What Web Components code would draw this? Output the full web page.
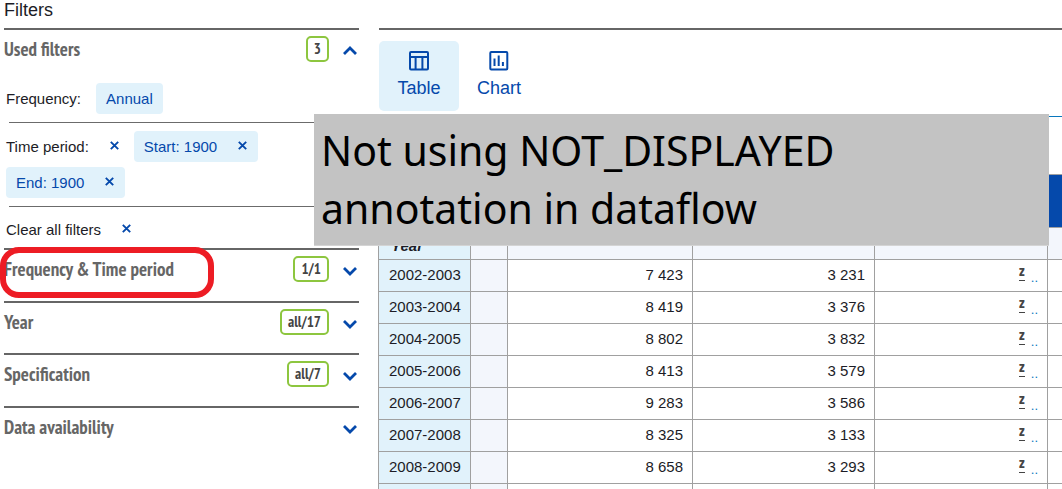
<!DOCTYPE html>
<html lang="en">
<head>
<meta charset="utf-8">
<title>Data explorer</title>
<style>
html, body { margin: 0; height: 100%; }
body { font: 15px/20px "Liberation Sans", Arial, sans-serif; color: #1c1c26; background: #fff; overflow: hidden; }
</style>
</head>
<body>
<data-explorer></data-explorer>

<script>
const NARROW = '"PT Sans Narrow", "Liberation Sans Narrow", "Open Sans Condensed", sans-serif';

function define(name, html, setup) {
  const template = document.createElement('template');
  template.innerHTML = html;
  customElements.define(name, class extends HTMLElement {
    connectedCallback() {
      if (this.shadowRoot) return;
      this.attachShadow({ mode: 'open' }).append(template.content.cloneNode(true));
      if (setup) setup(this, this.shadowRoot);
    }
  });
}

define('clear-button', `
<style>
:host { display: inline-flex; }
button { border: 0; padding: 0; margin: 0; background: none; width: 9px; height: 20px; display: flex; align-items: center; cursor: pointer; }
svg { display: block; margin-bottom: 3px; }
</style>
<button type="button" aria-label="Remove"><svg width="9" height="9" viewBox="0 0 9 9" stroke="#0549ab" stroke-width="1.9"><path d="M.8.8l7.4 7.4M8.2.8L.8 8.2"/></svg></button>`);

define('filter-chip', `
<style>
:host { display: inline-flex; align-items: center; gap: 21px; height: 31px; padding: 0 10px; border-radius: 4px; background: #e1f2fb; color: #0549ab; white-space: nowrap; }
:host([removable]) { padding-right: 11px; }
clear-button[hidden] { display: none; }
</style>
<slot></slot><clear-button></clear-button>`, (host, root) => {
  root.querySelector('clear-button').hidden = !host.hasAttribute('removable');
});

define('filter-row', `
<style>
:host { display: flex; flex-wrap: wrap; align-items: center; gap: 5px 15px; margin-left: 5px; padding: 8px 0; border-top: 1px solid #6b6b6b; }
:host([first]) { border-top: 0; padding-top: 2px; }
:host([last]) { padding: 7px 0 3px; }
.label { display: inline-flex; align-items: center; gap: 21px; height: 31px; margin-left: -3px; }
::slotted(filter-chip[wrapped]) { margin-left: -3px; }
clear-button[hidden] { display: none; }
</style>
<span class="label"><span></span><clear-button></clear-button></span><slot></slot>`, (host, root) => {
  root.querySelector('.label span').textContent = host.getAttribute('label');
  root.querySelector('clear-button').hidden = !host.hasAttribute('removable');
});

define('filter-section', `
<style>
:host { display: block; position: relative; border-top: 2px solid #666; }
button { box-sizing: border-box; width: 100%; height: 51px; padding: 6px 0 0; border: 0; margin: 0; background: none; display: flex; align-items: flex-start; text-align: left; cursor: pointer; color: #666; font: bold 19px/26px ${NARROW}; }
:host([compact]) button { height: 50px; }
.title { flex: 1; }
.badge { box-sizing: border-box; height: 26px; border: 2px solid #8dc63f; border-radius: 5px; padding: 0 6px; font-size: 15px; line-height: 21px; color: #444; }
.badge[hidden] { display: none; }
svg { display: block; width: 18px; height: 26px; margin-left: 12px; }
:host([open]) svg path { d: path("M3 18l6-6 6 6"); }
:host([marked])::after { content: ""; position: absolute; left: -4px; top: -3px; width: 202px; height: 39px; border: 6px solid #ed1c24; border-radius: 19px; pointer-events: none; }
</style>
<button type="button"><span class="title"></span><span class="badge"></span>
<svg viewBox="0 0 18 26" fill="none" stroke="#0549ab" stroke-width="2.8"><path d="M3 12l6 6 6-6"/></svg></button>
<slot></slot>`, (host, root) => {
  root.querySelector('.title').textContent = host.getAttribute('label');
  const badge = root.querySelector('.badge');
  badge.textContent = host.getAttribute('count') || '';
  badge.hidden = !host.hasAttribute('count');
  root.querySelector('button').setAttribute('aria-expanded', host.hasAttribute('open'));
});

define('filter-panel', `
<style>
:host { display: block; }
h2 { margin: 0; height: 28px; font-size: 18px; line-height: 20px; font-weight: normal; }
</style>
<h2>Filters</h2>
<filter-section label="Used filters" count="3" open>
  <filter-row first label="Frequency:"><filter-chip>Annual</filter-chip></filter-row>
  <filter-row label="Time period:" removable><filter-chip removable>Start: 1900</filter-chip><filter-chip wrapped removable>End: 1900</filter-chip></filter-row>
  <filter-row last label="Clear all filters" removable></filter-row>
</filter-section>
<filter-section label="Frequency &amp; Time period" count="1/1" marked></filter-section>
<filter-section label="Year" count="all/17" compact></filter-section>
<filter-section label="Specification" count="all/7"></filter-section>
<filter-section label="Data availability"></filter-section>`);

define('view-tab', `
<style>
:host { display: block; }
button { display: flex; flex-direction: column; align-items: center; gap: 7px; width: 80px; height: 70px; padding: 10px 0 0; margin: 0; border: 0; border-radius: 5px; background: none; color: #0549ab; font: inherit; font-size: 18px; cursor: pointer; }
:host([selected]) button { background: #e1f2fb; }
</style>
<button type="button"><slot name="icon"></slot><slot></slot></button>`);

define('data-table', `
<style>
:host { display: block; overflow: hidden; margin-left: -1px; }
table { border-collapse: collapse; table-layout: fixed; width: 760px; }
th, td { box-sizing: border-box; height: 32px; padding: 0 9px 2px 10px; border: 1px solid #a0a0a0; text-align: right; font-weight: normal; line-height: 20px; white-space: nowrap; overflow: hidden; }
.axis { height: 53px; background: #0549ab; }
tbody th, .corner { background: #e1f2fb; text-align: left; }
.corner { font: italic bold 15px/20px "Liberation Sans", Arial, sans-serif; padding: 8px 0 0 12px; vertical-align: top; }
.sub, .gap { background: #f3f6fc; }
abbr { display: inline-block; vertical-align: 4px; margin-right: 6px; font: bold 15px/14px ${NARROW}; color: #444; text-decoration: none; border-bottom: 1px dashed #444; height: 16px; }
i { font-style: normal; color: #0977bd; vertical-align: -2px; font-size: 13px; line-height: 14px; }
</style>
<table>
<colgroup><col style="width:92px"><col style="width:37px"><col style="width:185px"><col style="width:182px"><col style="width:173px"><col></colgroup>
<thead>
<tr><th class="axis" colspan="2"></th><th class="axis"></th><th class="axis"></th><th class="axis"></th><th class="axis"></th></tr>
<tr><th class="corner">Year</th><th class="sub"></th><th class="sub"></th><th class="sub"></th><th class="sub"></th><th class="sub"></th></tr>
</thead>
<tbody></tbody>
</table>`, (host, root) => {
  const rows = [
    ['2002-2003', '7 423', '3 231'], ['2003-2004', '8 419', '3 376'], ['2004-2005', '8 802', '3 832'],
    ['2005-2006', '8 413', '3 579'], ['2006-2007', '9 283', '3 586'], ['2007-2008', '8 325', '3 133'],
    ['2008-2009', '8 658', '3 293']
  ];
  const row = ([year, a, b]) => `<tr><th scope="row">${year}</th><td class="gap"></td><td>${a}</td><td>${b}</td><td><abbr>z</abbr><i>..</i></td><td></td></tr>`;
  root.querySelector('tbody').innerHTML = rows.map(row).join('') +
    '<tr><th></th><td class="gap"></td><td></td><td></td><td></td><td></td></tr>';
});

define('data-view', `
<style>
:host { display: block; margin-top: 28px; border-top: 2px solid #666; min-width: 0; }
nav { display: flex; padding: 11px 0 5px; }
svg { display: block; }
.rule { border-top: 1px solid #0977bd; height: 57px; }
</style>
<nav>
<view-tab selected><svg slot="icon" width="20" height="20" viewBox="0 0 20 20" fill="none" stroke="#0549ab" stroke-width="2"><rect x="1" y="1" width="18" height="17.5" rx="1"/><path d="M1 6h18M6.6 6v12M13.4 6v12"/></svg>Table</view-tab>
<view-tab><svg slot="icon" width="20" height="20" viewBox="0 0 20 20" fill="none" stroke="#0549ab" stroke-width="2"><rect x="1.3" y="1" width="17" height="17.5" rx="1"/><path d="M5.5 7.5V15M9.7 4.5V15M13.9 11V15"/></svg>Chart</view-tab>
</nav>
<div class="rule"></div>
<data-table></data-table>`);

define('note-banner', `
<style>
:host { display: block; box-sizing: border-box; background: #c3c3c3; color: #000; padding: 7px 7px 8px; font: 41px/58px "Noto Sans", "Segoe UI", sans-serif; border-bottom: 1px solid #d4d4d4; }
</style>
<slot></slot>`);

define('data-explorer', `
<style>
:host { position: relative; display: grid; grid-template-columns: 355px minmax(0, 1fr); column-gap: 20px; padding-left: 4px; height: 100%; overflow: hidden; }
note-banner { position: absolute; left: 314px; right: 13px; top: 114px; }
</style>
<filter-panel></filter-panel>
<data-view></data-view>
<note-banner>Not using NOT_DISPLAYED<br>annotation in dataflow</note-banner>`);
</script>
</body>
</html>
